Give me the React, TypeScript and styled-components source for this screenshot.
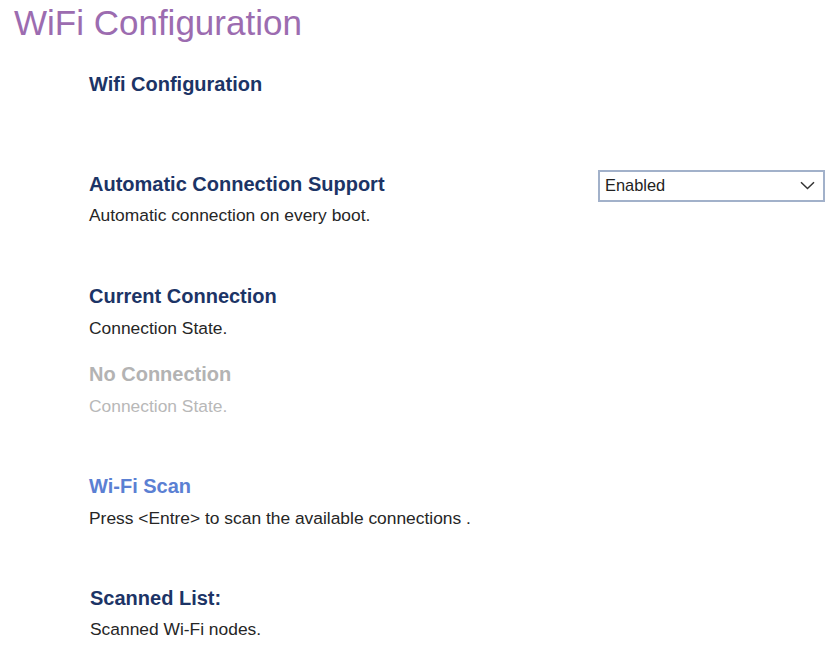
import React from "react";
import styled, { createGlobalStyle } from "styled-components";

const Global = createGlobalStyle`
  html, body { margin: 0; padding: 0; background: #ffffff; }
  body { font-family: "Liberation Sans", Arial, sans-serif; }
`;

const Page = styled.div`
  width: 835px;
  padding-top: 3px;
  box-sizing: border-box;
`;

const Title = styled.h1`
  margin: 0;
  padding-left: 14px;
  font-size: 35px;
  line-height: 40px;
  font-weight: 400;
  color: #9c6cb0;
`;

const Content = styled.div`
  display: flex;
  flex-direction: column;
  padding: 0 10px 0 89px;
`;

const Heading = styled.div<{ $tone?: "normal" | "muted" | "link" }>`
  font-size: 20px;
  line-height: 24px;
  font-weight: 700;
  color: ${(p) =>
    p.$tone === "muted" ? "#b3b3b3" : p.$tone === "link" ? "#5b80d3" : "#1c3466"};
`;

const SubTitle = styled(Heading)`
  margin-top: 29px;
`;

const Desc = styled.div<{ $muted?: boolean; $gap?: number }>`
  margin-top: ${(p) => p.$gap ?? 8}px;
  font-size: 17.4px;
  line-height: 22px;
  color: ${(p) => (p.$muted ? "#b8b8b8" : "#262626")};
`;

const Section = styled.div<{ $gap: number }>`
  margin-top: ${(p) => p.$gap}px;
  display: flex;
  justify-content: space-between;
  align-items: flex-start;
`;

const Block = styled.div<{ $indent?: number }>`
  display: flex;
  flex-direction: column;
  padding-left: ${(p) => p.$indent ?? 0}px;
`;

const SelectBox = styled.div`
  margin-top: -2px;
  width: 227px;
  height: 32px;
  box-sizing: border-box;
  border: 2px solid #a2b1ca;
  background: #ffffff;
  display: flex;
  align-items: center;
  justify-content: space-between;
  padding: 0 8px 1px 5px;
  font-size: 16.4px;
  color: #222222;
`;

const Chevron = () => (
  <svg width="15" height="9" viewBox="0 0 15 9" fill="none">
    <path d="M1 1.2 L7.5 7.5 L14 1.2" stroke="#333" strokeWidth="1.5" />
  </svg>
);

export default function App() {
  return (
    <Page>
      <Global />
      <Title>WiFi Configuration</Title>
      <Content>
        <SubTitle>Wifi Configuration</SubTitle>
        <Section $gap={76}>
          <Block>
            <Heading>Automatic Connection Support</Heading>
            <Desc>Automatic connection on every boot.</Desc>
          </Block>
          <SelectBox>
            <span>Enabled</span>
            <Chevron />
          </SelectBox>
        </Section>
        <Section $gap={58}>
          <Block>
            <Heading>Current Connection</Heading>
            <Desc $gap={9}>Connection State.</Desc>
          </Block>
        </Section>
        <Section $gap={23}>
          <Block>
            <Heading $tone="muted">No Connection</Heading>
            <Desc $muted $gap={9}>Connection State.</Desc>
          </Block>
        </Section>
        <Section $gap={57}>
          <Block>
            <Heading $tone="link">Wi-Fi Scan</Heading>
            <Desc $gap={9}>Press &lt;Entre&gt; to scan the available connections .</Desc>
          </Block>
        </Section>
        <Section $gap={57}>
          <Block $indent={1}>
            <Heading>Scanned List:</Heading>
            <Desc>Scanned Wi-Fi nodes.</Desc>
          </Block>
        </Section>
      </Content>
    </Page>
  );
}
